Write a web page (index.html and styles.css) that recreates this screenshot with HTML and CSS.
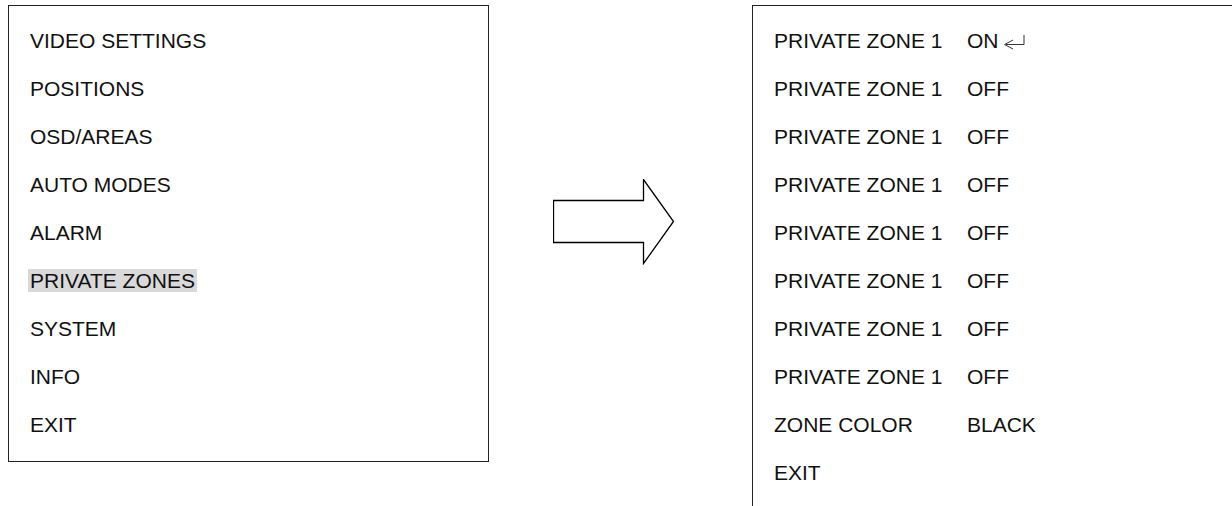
FILE: index.html
```html
<!DOCTYPE html>
<html>
<head>
  <title>Private Zones Menu</title>
  <meta name="viewport" content="width=device-width, initial-scale=1.0">
  <link rel="stylesheet" href="styles.css">
</head>
<body>
  <div class="menu main-menu">
    <div class="row">VIDEO SETTINGS</div>
    <div class="row">POSITIONS</div>
    <div class="row">OSD/AREAS</div>
    <div class="row">AUTO MODES</div>
    <div class="row">ALARM</div>
    <div class="row"><span class="selected">PRIVATE ZONES</span></div>
    <div class="row">SYSTEM</div>
    <div class="row">INFO</div>
    <div class="row">EXIT</div>
  </div>

  <div class="arrow">
    <svg width="124" height="86" viewBox="0 0 124 86">
      <polygon points="0.5,21.5 90.5,21.5 90.5,0.5 120.5,42.5 90.5,84.5 90.5,63.5 0.5,63.5" fill="#fff" stroke="#000" stroke-width="1.3"/>
    </svg>
  </div>

  <div class="menu zone-menu">
    <div class="row"><span class="label">PRIVATE ZONE 1</span><span class="value">ON<svg class="enter" width="22" height="16" viewBox="0 0 22 16"><path d="M10 6 L1.5 10.5 L10 15 M3 10.5 H21 V1" fill="none" stroke="#333" stroke-width="1"/></svg></span></div>
    <div class="row"><span class="label">PRIVATE ZONE 1</span><span class="value">OFF</span></div>
    <div class="row"><span class="label">PRIVATE ZONE 1</span><span class="value">OFF</span></div>
    <div class="row"><span class="label">PRIVATE ZONE 1</span><span class="value">OFF</span></div>
    <div class="row"><span class="label">PRIVATE ZONE 1</span><span class="value">OFF</span></div>
    <div class="row"><span class="label">PRIVATE ZONE 1</span><span class="value">OFF</span></div>
    <div class="row"><span class="label">PRIVATE ZONE 1</span><span class="value">OFF</span></div>
    <div class="row"><span class="label">PRIVATE ZONE 1</span><span class="value">OFF</span></div>
    <div class="row"><span class="label">ZONE COLOR</span><span class="value">BLACK</span></div>
    <div class="row">EXIT</div>
  </div>
</body>
</html>
```

FILE: styles.css
```css
html,
body {
  height: 100%;
  overflow: hidden;
}

body {
  margin: 0;
  padding: 5px 0 0 8px;
  box-sizing: border-box;
  background-color: #fff;
  color: #111;
  font-family: "Liberation Sans", Arial, sans-serif;
  font-size: 21px;
  display: flex;
  align-items: flex-start;
}

.menu {
  box-sizing: border-box;
  border: 1px solid #222;
  padding: 11px 0 12px 21px;
}

.row {
  line-height: 48px;
  height: 48px;
  white-space: nowrap;
}

.main-menu {
  width: 481px;
}

.selected {
  background-color: #d9d9d9;
  padding: 0 2px;
  margin-left: -2px;
}

.arrow {
  width: 263px;
  padding: 174px 0 0 64px;
  box-sizing: border-box;
}

.arrow svg {
  display: block;
}

.zone-menu {
  flex: 1;
  border-right: none;
  border-bottom: none;
  height: 600px;
}

.label {
  display: inline-block;
  width: 193px;
}

.enter {
  margin-left: 4px;
  vertical-align: -2px;
}
```
